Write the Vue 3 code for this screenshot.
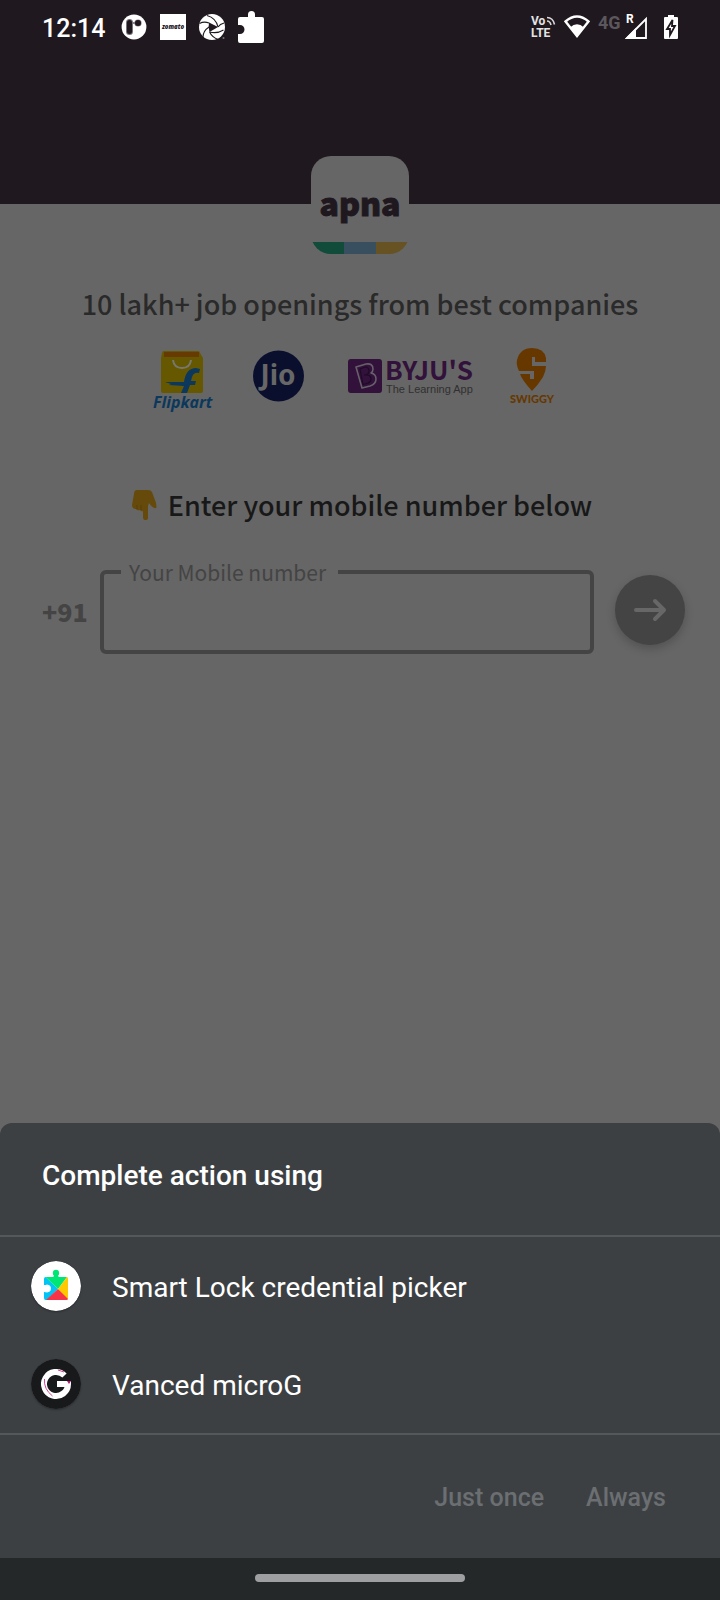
<script setup>
import { ref } from 'vue'

const mobile = ref('')
const apps = [
  { id: 'smartlock', name: 'Smart Lock credential picker' },
  { id: 'microg', name: 'Vanced microG' },
]
</script>

<template>
  <div class="screen">
    <header class="top">
      <div class="status">
        <div class="status-left">
          <time class="clock">12:14</time>
          <svg class="s26" viewBox="0 0 26 26" aria-hidden="true">
            <circle cx="13" cy="13" r="12.4" fill="#fff" />
            <rect x="5" y="5" width="7" height="16" rx="3.500" fill="#77737a" />
            <rect x="6" y="6" width="5" height="14" rx="2.500" fill="#1f181f" />
            <path d="M12 9h4" stroke="#858087" stroke-width="2" />
            <circle cx="17" cy="9" r="3.600" fill="#858087" />
            <circle cx="17" cy="9" r="3" fill="#1f181f" />
          </svg>
          <svg class="s26" viewBox="0 0 26 26" role="img" aria-label="zomato">
            <rect width="26" height="26" fill="#fff" />
            <text x="13" y="15" text-anchor="middle" class="zomato">zomato</text>
          </svg>
          <svg class="s26" viewBox="0 0 26 26" aria-hidden="true">
            <circle cx="13" cy="13" r="13" fill="#fff" />
            <path d="M10 8.500L19 13l-8.500 5q-1.500-5-.5-9.500z" fill="#1f181f" />
            <path d="M10 9Q5 7 .5 9.500M19 13Q17 4 8 1.500M19 13Q21 10 25 9M10.500 18Q18 20 24.500 16M10.500 18Q13 23 19 25.500M10 13Q4 17 4 23" stroke="#1f181f" stroke-width="1.100" fill="none" />
            <circle cx="24.500" cy="24" r="1" fill="#77737a" />
          </svg>
          <svg class="puzzle" viewBox="0 0 26 32" aria-hidden="true">
            <path d="M2 6h8V3.500a3.500 3.500 0 0 1 7 0V6h7a2 2 0 0 1 2 2v22a2 2 0 0 1-2 2H2a2 2 0 0 1-2-2v-7h2a4.500 4.500 0 0 0 0-9H0V8a2 2 0 0 1 2-2z" fill="#fff" />
          </svg>
        </div>
        <div class="status-right">
          <svg width="26" height="24" viewBox="0 0 26 24" role="img" aria-label="VoLTE">
            <text x="1" y="10" class="volte">Vo</text>
            <text x="1" y="22" class="volte">LTE</text>
            <path d="M17 6q3 0 4 4M17 2.500q6 0 7.500 7" stroke="#d8d7d9" stroke-width="1.600" fill="none" />
          </svg>
          <svg class="wifi" width="26" height="24" viewBox="0 0 26 24" aria-hidden="true">
            <path d="M1.500 6.500Q13-3.500 24.500 6.500L13 21z" stroke="#fff" stroke-width="2.400" fill="none" />
            <path d="M6 12.500Q13 6 20 12.500L13 22z" fill="#fff" />
          </svg>
          <svg class="signal" width="50" height="30" viewBox="0 -3 50 30" role="img" aria-label="4G roaming">
            <text x="0" y="14" class="fourg">4G</text>
            <text x="28" y="8" class="roam">R</text>
            <path d="M29 23L48 4V23z" stroke="#fff" stroke-width="1.800" fill="none" />
            <path d="M27 24L38 13V24z" fill="#fff" />
          </svg>
          <svg width="14" height="24" viewBox="0 0 14 24" aria-hidden="true">
            <path d="M4 0h6v2h3a1 1 0 0 1 1 1v20a1 1 0 0 1-1 1H1a1 1 0 0 1-1-1V3a1 1 0 0 1 1-1h3z" fill="#fff" />
            <path d="M8.500 5L3 14h3v6l5-9H8z" fill="#fff" stroke="#1f181f" stroke-width="1.800" />
          </svg>
        </div>
      </div>
    </header>

    <main class="login">
      <div class="logo">
        <span class="logo-name">apna</span>
        <span class="stripes"><i class="green"></i><i class="blue"></i><i class="gold"></i></span>
      </div>

      <h1 class="tagline">10 lakh+ job openings from best companies</h1>

      <div class="brands">
        <svg width="66" height="64" viewBox="0 -3 66 64" role="img" aria-label="Flipkart">
          <path d="M10 2q0-2 2-2h34q2 0 2 2l3 5v33q0 2-2 2H11q-2 0-2-2V7z" fill="#665800" />
          <path d="M12 1h35v5H12z" fill="#663a00" />
          <path d="M21 9q1 8 9 8t9-8" stroke="#77776f" stroke-width="2" fill="none" />
          <path d="M29 42l3-7-15-1 2-1-6-2h19q2-14 12-14l4 1-1 4q-5-1-7 4l-1 4h5l-1 4h-5l-3 8z" fill="#0b385c" />
          <text x="1" y="57" class="flipkart">Flipkart</text>
        </svg>
        <svg width="53" height="64" viewBox="0 -2 53 64" role="img" aria-label="Jio">
          <circle cx="26.500" cy="26" r="25.500" fill="#0b0f2e" />
          <text x="26" y="35" text-anchor="middle" class="jio">Jio</text>
        </svg>
        <svg width="135" height="64" viewBox="-9 -9 135 64" role="img" aria-label="BYJU'S The Learning App">
          <rect x="0" y="2" width="34" height="34" rx="3" fill="#32113b" />
          <path d="M8 10l10-3q7-1 7 5 0 3-2 4 5 1 5 6 0 5-6 7l-8 2z" stroke="#67606a" stroke-width="1.600" fill="none" stroke-linejoin="round" />
          <path d="M12 12l5-2q4 0 4 4t-5 4q7-1 7 4 0 4-6 5l-2 .5z" stroke="#1f0b26" stroke-width="1.200" fill="none" />
          <text x="37" y="23" class="byju">BYJU'S</text>
          <text x="38" y="36" class="learn">The Learning App</text>
        </svg>
        <svg width="48" height="64" viewBox="0 1 48 64" role="img" aria-label="Swiggy">
          <path d="M24 44Q14 33 12 27h10v5h4v-8H11Q8 18 9 13 12 1 24 1q12 0 14 10v4H27v-5h-3v9h14q0 5-3 11-5 8-11 14z" fill="#663800" />
          <text x="24" y="56" text-anchor="middle" class="swiggy">SWIGGY</text>
        </svg>
      </div>

      <h2 class="prompt">
        <svg width="26" height="32" viewBox="0 0 26 32" aria-hidden="true">
          <path d="M5 1h11q3 0 4 2l4 11q1 5 0 5-3 1-7-5l-1 3v12q0 2-3 2-2 0-2-3v-6q-2 1-3-1-3 1-4-1-4 0-4-4L2 5q0-4 3-4z" fill="#664a0b" />
          <path d="M5 20V16M9 21V16" stroke="#573f0b" fill="none" />
        </svg>
        <span>Enter your mobile number below</span>
      </h2>

      <form class="phone" @submit.prevent>
        <span class="code">+91</span>
        <fieldset class="field">
          <legend><label for="mobile">Your Mobile number</label></legend>
          <input id="mobile" v-model="mobile" type="tel" />
        </fieldset>
        <button class="go" type="submit" aria-label="Continue">
          <svg width="34" height="24" viewBox="0 0 34 24" aria-hidden="true">
            <path d="M3 12h28M22 3l9 9-9 9" stroke="#676767" stroke-width="4" stroke-linecap="round" stroke-linejoin="round" fill="none" />
          </svg>
        </button>
      </form>
    </main>

    <section class="sheet" aria-labelledby="sheet-title">
      <h2 id="sheet-title" class="sheet-title">Complete action using</h2>
      <div class="apps">
        <button v-for="app in apps" :key="app.id" class="app" type="button">
          <svg v-if="app.id === 'smartlock'" class="app-icon" viewBox="0 0 50 50" aria-hidden="true">
            <circle cx="25" cy="25" r="25" fill="#fff" />
            <path d="M14.500 16L27 28 16 39H14.500Q13 39 13 37v-6q2 0 3 .5 4-.5 4-4t-4-4q-1 .5-3 .5v-6q0-2 1.500-2z" fill="#00c4f5" />
            <path d="M14.500 16H22l1-1v-3h4v3l1 1h8L27 28z" fill="#00e676" />
            <circle cx="25" cy="12" r="3.200" fill="#00e676" />
            <path d="M36 16q1 0 1 2v19q0 1-1 1.500L27 28z" fill="#ffc900" />
            <path d="M27 28l10 10q-.5 1-1.500 1H15z" fill="#f53448" />
          </svg>
          <svg v-else class="app-icon" viewBox="0 0 50 50" aria-hidden="true">
            <circle cx="25" cy="25" r="25" fill="#18191b" />
            <path d="M33.500 16.500A12 12 0 1 0 37 25H26" stroke="#fff" stroke-width="6" fill="none" />
            <path d="M13.500 20q-1 10 8 17M27 11l6 2" stroke="#d64293" stroke-width="1" fill="none" />
            <path d="M36 22h4l-2 3z" fill="#b91578" />
          </svg>
          <span class="app-name">{{ app.name }}</span>
        </button>
      </div>
      <div class="actions">
        <button type="button" disabled>Just once</button>
        <button type="button" disabled>Always</button>
      </div>
    </section>
    <footer class="nav"><span class="pill"></span></footer>
  </div>
</template>

<style>
body { margin: 0; background: #666; }
</style>

<style scoped>
.screen {
  display: flex;
  flex-direction: column;
  min-height: 100vh;
  background: #666;
  font-family: "Noto Sans CJK SC", "Noto Sans", sans-serif;
}
h1, h2 { margin: 0; }
svg { display: block; flex: none; }
button { font: inherit; border: 0; background: none; padding: 0; }

.top { background: #1f181f; height: 204px; }
.status {
  display: flex;
  justify-content: space-between;
  align-items: center;
  height: 54px;
  padding: 0 42px;
  font-family: Roboto, sans-serif;
}
.status-left { display: flex; align-items: center; gap: 13px; }
.clock { color: #fff; font-size: 25px; font-weight: 500; line-height: 32px; padding-top: 4px; margin-right: 3px; }
.s26 { width: 26px; height: 26px; }
.puzzle { width: 26px; height: 32px; }
.zomato { font: italic 900 6px "Noto Sans", sans-serif; fill: #1f181f; }
.status-right { display: flex; align-items: center; gap: 8px; }
.signal { margin-right: 8px; }
.volte { font: 700 12px Roboto, sans-serif; fill: #e4e3e4; }
.fourg { font: 700 18px Roboto, sans-serif; fill: #5c575d; }
.roam { font: 700 12px Roboto, sans-serif; fill: #fff; }

.login { display: flex; flex-direction: column; align-items: center; }
.logo {
  display: flex;
  flex-direction: column;
  width: 98px;
  height: 98px;
  margin-top: -48px;
  border-radius: 20px;
  overflow: hidden;
  background: #666;
}
.logo-name {
  text-align: center;
  font-size: 32px;
  font-weight: 900;
  line-height: 92px;
  height: 86px;
  color: #1f181f;
  -webkit-text-stroke: 1px #1f181f;
}
.stripes { display: flex; height: 12px; }
.stripes i { flex: 1; }
.green { background: #114b3a; }
.blue { background: #384f60; }
.gold { background: #665223; }

.tagline { margin-top: 30px; font-size: 27px; line-height: 40px; font-weight: 500; color: #2a2a2a; }
.brands { display: flex; justify-content: center; gap: 34px; margin-top: 24px; padding-right: 12px; }
.flipkart { font: italic 700 16px "Open Sans", sans-serif; fill: #0b385c; }
.jio { font: 700 28px "Noto Sans", sans-serif; fill: #676767; }
.byju { font: 700 26px "Noto Sans CJK SC", sans-serif; fill: #32113b; }
.learn { font: 400 11px "Liberation Sans", sans-serif; fill: #303030; }
.swiggy { font: 900 11px Lato, sans-serif; fill: #663800; }

.prompt {
  display: flex;
  align-items: center;
  gap: 10px;
  margin-top: 73px;
  padding-left: 4px;
  font-size: 27px;
  line-height: 40px;
  font-weight: 500;
  color: #181818;
}
.phone { display: flex; align-items: center; align-self: stretch; margin-top: 35px; padding: 0 35px 0 42px; }
.code { width: 58px; margin-top: 8px; font-size: 25px; line-height: 32px; font-weight: 900; color: #444; }
.field {
  flex: 1;
  min-width: 0;
  margin: 0 21px 0 0;
  padding: 0 17px;
  border: 4px solid #444;
  border-radius: 6px;
}
.field legend { padding: 0 12px 0 8px; font-size: 21px; line-height: 24px; color: #444; }
.field input {
  width: 100%;
  height: 66px;
  padding: 0;
  border: 0;
  outline: 0;
  background: none;
  font: inherit;
  font-size: 26px;
  color: #181818;
  display: block;
}
.go {
  display: flex;
  align-items: center;
  justify-content: center;
  width: 70px;
  height: 70px;
  margin-top: 6px;
  border-radius: 50%;
  background: #444;
  box-shadow: 0 4px 10px rgba(0, 0, 0, 0.2);
}

.sheet {
  margin-top: auto;
  border-radius: 12px 12px 0 0;
  background: #3d4043;
  color: #fff;
  font-family: Roboto, sans-serif;
}
.sheet-title { padding: 33px 42px 39px; font-size: 28px; line-height: 40px; font-weight: 500; }
.apps { border: solid #54585a; border-width: 2px 0; }
.app {
  display: flex;
  align-items: center;
  gap: 31px;
  width: 100%;
  height: 98px;
  padding: 0 31px;
  color: #fff;
  font-size: 28px;
  line-height: 40px;
  text-align: left;
}
.app-name { padding-top: 4px; }
.app-icon { width: 50px; height: 50px; border-radius: 50%; box-shadow: 0 1px 2px rgba(0, 0, 0, 0.3); }
.actions { display: flex; justify-content: flex-end; gap: 42px; padding: 47px 54px 44px; }
.actions button { font-size: 25px; line-height: 32px; font-weight: 500; color: #6b6f72; }

.nav { display: flex; justify-content: center; align-items: flex-start; height: 42px; background: #242829; }
.pill { width: 210px; height: 8px; margin-top: 16px; border-radius: 4px; background: #9d9fa0; }
</style>
